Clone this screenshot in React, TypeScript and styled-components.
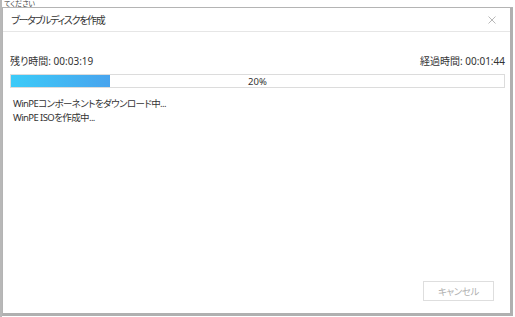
import styled, { createGlobalStyle } from "styled-components";

const GlobalStyle = createGlobalStyle`
    html, body {
        margin: 0;
        padding: 0;
        background: #fff;
    }
    body {
        font-family: "Noto Sans", "Noto Sans CJK JP", sans-serif;
        font-feature-settings: "palt";
        color: #333;
    }
`

const Page = styled.div`
    width: 515px;
    height: 317px;
    box-sizing: border-box;
    border-left: 2px solid #b8b8b8;
    display: flex;
    flex-direction: column;
    overflow: hidden;
`

const BehindStrip = styled.div`
    height: 7px;
    display: flex;
    align-items: flex-end;
    overflow: hidden;
    padding-left: 2px;
`

const BehindText = styled.span`
    font-size: 7px;
    line-height: 7px;
    color: #444;
`

const Dialog = styled.div`
    width: 511px;
    height: 309px;
    box-sizing: border-box;
    background: #fff;
    border-top: 1px solid #b4b4b4;
    border-left: 1px solid #b4b4b4;
    border-right: 3px solid #b0b0b0;
    border-bottom: 3px solid #b0b0b0;
    display: flex;
    flex-direction: column;
`

const Header = styled.div`
    height: 23px;
    display: flex;
    align-items: center;
    justify-content: space-between;
    padding: 0 14px 0 8px;
    border-bottom: 1px solid #e6e6e6;
`

const Title = styled.span`
    font-size: 10px;
    letter-spacing: -1.3px;
    color: #333;
`

const CloseIcon = styled.svg`
    width: 8px;
    height: 8px;
`

const Body = styled.div`
    flex: 1;
    display: flex;
    flex-direction: column;
    padding: 22px 5px 12px 7px;
`

const TimeRow = styled.div`
    display: flex;
    justify-content: space-between;
    font-size: 10px;
    line-height: 14px;
`

const ProgressTrack = styled.div`
    position: relative;
    height: 14px;
    margin-top: 6px;
    box-sizing: border-box;
    border: 1px solid #dcdcdc;
    background: #fff;
    display: flex;
    align-items: center;
    justify-content: center;
`

const ProgressFill = styled.div`
    position: absolute;
    left: 0;
    top: 0;
    bottom: 0;
    background: linear-gradient(to right, #3ccbf8, #48a4ee);
`

const ProgressLabel = styled.span`
    position: relative;
    font-size: 9.5px;
    color: #333;
`

const Messages = styled.div`
    margin-top: 9px;
    padding-left: 3px;
    font-size: 9.5px;
    line-height: 14px;
    letter-spacing: -0.6px;
`

const Footer = styled.div`
    margin-top: auto;
    display: flex;
    justify-content: flex-end;
    padding-right: 11px;
`

const CancelButton = styled.button`
    width: 71px;
    height: 20px;
    border: 1px solid #dedede;
    background: #fff;
    color: #b0b0b0;
    font-family: inherit;
    font-feature-settings: "palt";
    font-size: 9.5px;
    letter-spacing: -0.4px;
    padding: 0;
`

export default function App() {
    const percent = 20

    return (
        <>
            <GlobalStyle />
            <Page>
                <BehindStrip>
                    <BehindText>てください</BehindText>
                </BehindStrip>
                <Dialog>
                    <Header>
                        <Title>ブータブルディスクを作成</Title>
                        <CloseIcon viewBox="0 0 8 8">
                            <path d="M0.5 0.5 L7.5 7.5 M7.5 0.5 L0.5 7.5" stroke="#b8b8b8" strokeWidth="1" />
                        </CloseIcon>
                    </Header>
                    <Body>
                        <TimeRow>
                            <span>残り時間: 00:03:19</span>
                            <span>経過時間: 00:01:44</span>
                        </TimeRow>
                        <ProgressTrack>
                            <ProgressFill style={{ width: `${percent}%` }} />
                            <ProgressLabel>{percent}%</ProgressLabel>
                        </ProgressTrack>
                        <Messages>
                            <div>WinPEコンポーネントをダウンロード中...</div>
                            <div>WinPE ISOを作成中...</div>
                        </Messages>
                        <Footer>
                            <CancelButton>キャンセル</CancelButton>
                        </Footer>
                    </Body>
                </Dialog>
            </Page>
        </>
    )
}
